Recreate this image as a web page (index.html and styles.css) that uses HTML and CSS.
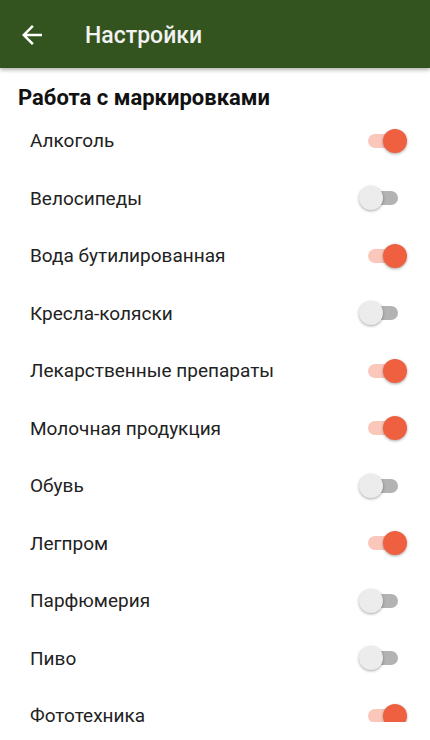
FILE: index.html
```html
<!DOCTYPE html>
<html lang="ru">
<head>
    <meta charset="UTF-8">
    <title>Настройки</title>
    <link rel="stylesheet" href="styles.css">
</head>
<body>
<div class="app">
    <header class="toolbar">
        <svg class="back" viewBox="0 0 24 24" width="30" height="30">
            <path d="M20 11H7.83l5.59-5.59L12 4l-8 8 8 8 1.41-1.41L7.83 13H20v-2z" fill="#fff"/>
        </svg>
        <h1>Настройки</h1>
    </header>
    <div class="content">
        <h2>Работа с маркировками</h2>
        <div class="row"><span>Алкоголь</span><div class="switch on"><i class="track"></i><i class="thumb"></i></div></div>
        <div class="row"><span>Велосипеды</span><div class="switch"><i class="track"></i><i class="thumb"></i></div></div>
        <div class="row"><span>Вода бутилированная</span><div class="switch on"><i class="track"></i><i class="thumb"></i></div></div>
        <div class="row"><span>Кресла-коляски</span><div class="switch"><i class="track"></i><i class="thumb"></i></div></div>
        <div class="row"><span>Лекарственные препараты</span><div class="switch on"><i class="track"></i><i class="thumb"></i></div></div>
        <div class="row"><span>Молочная продукция</span><div class="switch on"><i class="track"></i><i class="thumb"></i></div></div>
        <div class="row"><span>Обувь</span><div class="switch"><i class="track"></i><i class="thumb"></i></div></div>
        <div class="row"><span>Легпром</span><div class="switch on"><i class="track"></i><i class="thumb"></i></div></div>
        <div class="row"><span>Парфюмерия</span><div class="switch"><i class="track"></i><i class="thumb"></i></div></div>
        <div class="row"><span>Пиво</span><div class="switch"><i class="track"></i><i class="thumb"></i></div></div>
        <div class="row"><span>Фототехника</span><div class="switch on"><i class="track"></i><i class="thumb"></i></div></div>
    </div>
</div>
</body>
</html>
```

FILE: styles.css
```css
html, body {
    margin: 0;
    background-color: white;
    font-family: Roboto, "Noto Sans", sans-serif;
}
.app {
    height: 740px;
    display: flex;
    flex-direction: column;
    overflow: hidden;
}
.toolbar {
    position: relative;
    z-index: 2;
    height: 68px;
    flex: none;
    display: flex;
    align-items: center;
    background-color: #33541e;
    box-shadow: 0 2px 4px rgba(0, 0, 0, 0.3);
}
.back {
    margin-left: 17px;
    margin-top: 2px;
}
.toolbar h1 {
    margin: 2px 0 0 38px;
    font-size: 23px;
    font-weight: 500;
    color: #f2f2f2;
}
.content {
    height: 654px;
    flex: none;
    overflow: hidden;
}
.content h2 {
    margin: 0;
    padding: 17px 0 0 18px;
    height: 26.75px;
    font-size: 22px;
    font-weight: bold;
    line-height: 26px;
    color: #111;
}
.row {
    height: 57.5px;
    display: flex;
    align-items: center;
    justify-content: space-between;
    padding: 0 23px 0 30px;
    font-size: 19px;
    color: #222;
}
.switch {
    position: relative;
    width: 48px;
    height: 24px;
}
.track {
    position: absolute;
    left: 9px;
    right: 9px;
    top: 5px;
    height: 14px;
    border-radius: 7px;
    background-color: #b3b3b3;
}
.thumb {
    position: absolute;
    left: 0;
    top: 0;
    width: 24px;
    height: 24px;
    border-radius: 50%;
    background-color: #ececec;
    box-shadow: 0 1px 3px rgba(0, 0, 0, 0.35);
}
.switch.on .track {
    background-color: #fbc7ba;
}
.switch.on .thumb {
    left: auto;
    right: 0;
    background-color: #ef6040;
}
```
